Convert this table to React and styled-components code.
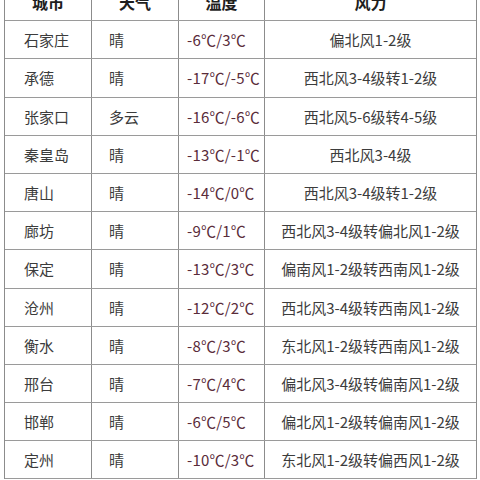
import React from "react";
import styled, {createGlobalStyle} from "styled-components";

const GlobalStyle = createGlobalStyle`
    html, body {
        margin: 0;
        padding: 0;
        background: #ffffff;
    }
    body {
        font-family: "Noto Sans CJK SC", "Liberation Sans", sans-serif;
        overflow: hidden;
    }
`;

const Page = styled.div`
    width: 480px;
    height: 480px;
    overflow: hidden;
    display: flex;
    background: #fff;
`;

const Sheet = styled.div`
    margin: -17px 0 0 4px;
    width: 471px;
    border-left: 1px solid #8c8c8c;
    border-right: 1px solid #8c8c8c;
    align-self: flex-start;
`;

const Row = styled.div`
    display: grid;
    grid-template-columns: 86px 87px 86px 1fr;
    height: 38.2px;
    border-bottom: 1px solid #9a9a9a;
    box-sizing: border-box;
`;

const Cell = styled.div`
    display: flex;
    align-items: center;
    justify-content: ${p => (p.center ? "center" : "flex-start")};
    padding-left: ${p => (p.center ? 0 : p.pad || 0)}px;
    border-left: ${p => (p.first ? "none" : "1px solid #8c8c8c")};
    font-size: 15px;
    color: ${p => (p.temp ? "#5a2c3a" : "#3c3c3c")};
    white-space: nowrap;
    letter-spacing: ${p => (p.temp ? "0.2px" : "0")};
`;

const Head = styled(Cell)`
    font-weight: 700;
    color: #1e1e1e;
    font-size: 16px;
    justify-content: center;
    padding-left: 0;
`;

const rows = [
    ["石家庄", "晴", "-6℃/3℃", "偏北风1-2级"],
    ["承德", "晴", "-17℃/-5℃", "西北风3-4级转1-2级"],
    ["张家口", "多云", "-16℃/-6℃", "西北风5-6级转4-5级"],
    ["秦皇岛", "晴", "-13℃/-1℃", "西北风3-4级"],
    ["唐山", "晴", "-14℃/0℃", "西北风3-4级转1-2级"],
    ["廊坊", "晴", "-9℃/1℃", "西北风3-4级转偏北风1-2级"],
    ["保定", "晴", "-13℃/3℃", "偏南风1-2级转西南风1-2级"],
    ["沧州", "晴", "-12℃/2℃", "西北风3-4级转西南风1-2级"],
    ["衡水", "晴", "-8℃/3℃", "东北风1-2级转西南风1-2级"],
    ["邢台", "晴", "-7℃/4℃", "偏北风3-4级转偏南风1-2级"],
    ["邯郸", "晴", "-6℃/5℃", "偏北风1-2级转偏南风1-2级"],
    ["定州", "晴", "-10℃/3℃", "东北风1-2级转偏西风1-2级"],
];

export default function App() {
    return (
        <Page>
            <GlobalStyle/>
            <Sheet>
                <Row>
                    <Head first>城市</Head>
                    <Head>天气</Head>
                    <Head>温度</Head>
                    <Head>风力</Head>
                </Row>
                {rows.map((r) => (
                    <Row key={r[0]}>
                        <Cell first pad={19}>{r[0]}</Cell>
                        <Cell pad={17}>{r[1]}</Cell>
                        <Cell temp pad={8}>{r[2]}</Cell>
                        <Cell center>{r[3]}</Cell>
                    </Row>
                ))}
            </Sheet>
        </Page>
    );
}
